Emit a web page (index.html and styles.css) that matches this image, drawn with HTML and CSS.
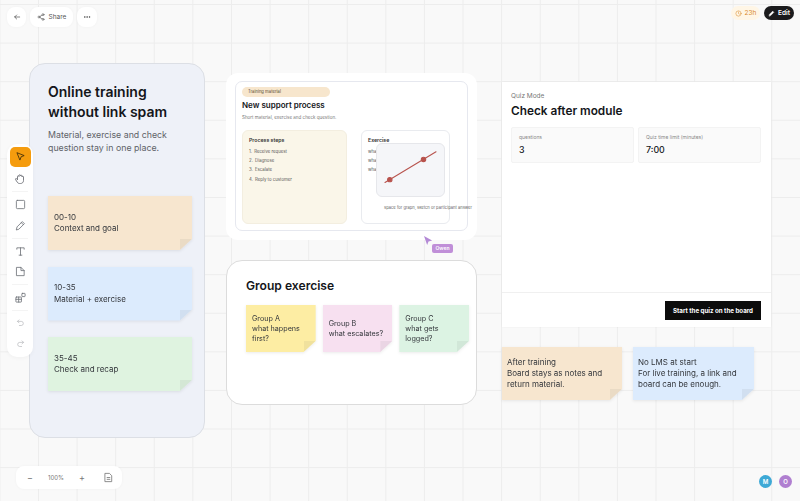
FILE: index.html
```html
<!DOCTYPE html>
<html lang="en">
<head>
  <meta charset="UTF-8" />
  <title>Online training board</title>
  <link rel="stylesheet" href="styles.css">
</head>
<body>
  <div class="board">

    <!-- top left -->
    <div class="top-left">
      <button class="chip chip-icon">
        <svg viewBox="0 0 24 24"><path d="M20 12H5M11 6l-6 6 6 6"/></svg>
      </button>
      <button class="chip chip-share">
        <svg viewBox="0 0 24 24"><circle cx="18" cy="5" r="3"/><circle cx="6" cy="12" r="3"/><circle cx="18" cy="19" r="3"/><path d="M8.6 13.5l6.8 4M15.4 6.5l-6.8 4"/></svg>
        Share
      </button>
      <button class="chip chip-icon chip-more">
        <svg viewBox="0 0 24 24"><circle cx="5" cy="12" r="1"/><circle cx="12" cy="12" r="1"/><circle cx="19" cy="12" r="1"/></svg>
      </button>
    </div>

    <!-- top right -->
    <div class="top-right">
      <div class="timer">
        <svg viewBox="0 0 24 24"><circle cx="12" cy="12" r="9"/><path d="M12 7v5l3 2"/></svg>
        23h
      </div>
      <div class="edit">
        <svg viewBox="0 0 24 24"><path d="M4 20l1-5L16 4l4 4L9 19z"/></svg>
        Edit
      </div>
    </div>

    <!-- toolbar -->
    <div class="toolbar">
      <div class="tool tool-active">
        <svg viewBox="0 0 24 24"><path d="M5 4l15 6-6.5 2.5L11 19z"/></svg>
      </div>
      <div class="tool">
        <svg class="tool-hand" viewBox="0 0 24 24"><path d="M7 13V7a1.5 1.5 0 013 0V5a1.5 1.5 0 013 0v1a1.5 1.5 0 013 0v2a1.5 1.5 0 013 0v7c0 4-3 6-6 6h-2c-3 0-4-2-6-5l-2-3c-1-2 2-3 3-1z"/></svg>
      </div>
      <div class="tool-sep"></div>
      <div class="tool">
        <svg viewBox="0 0 24 24"><rect x="3" y="3" width="18" height="18" rx="2"/></svg>
      </div>
      <div class="tool">
        <svg viewBox="0 0 24 24"><path d="M3 21l1.500-6L16 3.500l4.500 4.500L9 19.500zM14 6l4 4"/></svg>
      </div>
      <div class="tool-sep"></div>
      <div class="tool">
        <svg viewBox="0 0 24 24"><path d="M4 7V4h16v3M12 4v16M9 20h6"/></svg>
      </div>
      <div class="tool">
        <svg viewBox="0 0 24 24"><path d="M4 3h9l7 7v11H4zM13 3v7h7"/></svg>
      </div>
      <div class="tool-sep"></div>
      <div class="tool">
        <svg viewBox="0 0 24 24"><rect x="2" y="11" width="12" height="11" rx="1"/><path d="M2 16h12M8 11v11"/><rect x="15" y="3" width="7" height="7" rx="1"/></svg>
      </div>
      <div class="tool-sep"></div>
      <div class="tool tool-faint">
        <svg viewBox="0 0 24 24"><path d="M8 5L4 9l4 4M4 9h10a5 5 0 010 11H9"/></svg>
      </div>
      <div class="tool tool-faint">
        <svg viewBox="0 0 24 24"><path d="M16 5l4 4-4 4M20 9H10a5 5 0 000 11h5"/></svg>
      </div>
    </div>

    <!-- agenda card -->
    <div class="item agenda">
      <h1>Online training without link spam</h1>
      <p>Material, exercise and check question stay in one place.</p>
      <div class="agenda-notes">
        <div class="note note-orange">00-10<br>Context and goal</div>
        <div class="note note-blue">10-35<br>Material + exercise</div>
        <div class="note note-green">35-45<br>Check and recap</div>
      </div>
    </div>

    <!-- material frame -->
    <div class="item material">
      <div class="material-inner">
        <div class="tag">Training material</div>
        <h2>New support process</h2>
        <div class="material-sub">Short material, exercise and check question.</div>
        <div class="material-cols">
          <div class="steps">
            <h3>Process steps</h3>
            <ol>
              <li>Receive request</li>
              <li>Diagnose</li>
              <li>Escalate</li>
              <li>Reply to customer</li>
            </ol>
          </div>
          <div class="exercise">
            <h3>Exercise</h3>
            <ul>
              <li>what</li>
              <li>what</li>
              <li>what</li>
            </ul>
          </div>
        </div>
      </div>
    </div>

    <div class="item chart">
      <svg viewBox="0 0 69 54">
        <path d="M8 40L61 8"/>
        <circle cx="13" cy="37" r="2.3"/>
        <circle cx="48" cy="16" r="2.3"/>
      </svg>
    </div>
    <div class="item chart-caption">space for graph, sketch or participant answer</div>

    <svg class="item cursor" viewBox="0 0 10 10"><path d="M0 0l9 5-4 1-1.500 4z"/></svg>
    <div class="item owner">Owen</div>

    <!-- group exercise -->
    <div class="item group">
      <h2>Group exercise</h2>
      <div class="group-notes">
        <div class="note note-yellow">Group A<br>what happens first?</div>
        <div class="note note-pink">Group B<br>what escalates?</div>
        <div class="note note-mint">Group C<br>what gets logged?</div>
      </div>
    </div>

    <!-- quiz -->
    <div class="item quiz">
      <div class="quiz-top">
        <div class="quiz-mode">Quiz Mode</div>
        <h2>Check after module</h2>
        <div class="stats">
          <div class="stat">
            <div class="stat-label">questions</div>
            <div class="stat-value">3</div>
          </div>
          <div class="stat">
            <div class="stat-label">Quiz time limit (minutes)</div>
            <div class="stat-value">7:00</div>
          </div>
        </div>
      </div>
      <div class="quiz-foot">
        <button class="quiz-start">Start the quiz on the board</button>
      </div>
    </div>

    <div class="item loose-note after-note">
      <div class="note note-orange">After training<br>Board stays as notes and return material.</div>
    </div>
    <div class="item loose-note lms-note">
      <div class="note note-blue">No LMS at start<br>For live training, a link and board can be enough.</div>
    </div>

    <!-- zoom -->
    <div class="zoombar">
      <span class="zoom-btn">&minus;</span>
      <span class="zoom-val">100%</span>
      <span class="zoom-btn">+</span>
      <svg viewBox="0 0 24 24"><path d="M5 3h9l5 5v13H5zM9 12h6M9 16h6"/></svg>
    </div>

    <!-- people -->
    <div class="people">
      <div class="avatar avatar-m">M</div>
      <div class="avatar avatar-o">O</div>
    </div>
  </div>
</body>
</html>
```

FILE: styles.css
```css
* {
  box-sizing: border-box;
}
html, body {
  margin: 0;
  height: 100%;
}
body {
  font-family: Inter, "Liberation Sans", sans-serif;
  color: #14161a;
  overflow: hidden;
}
h1, h2, h3, p, ol, ul {
  margin: 0;
  padding: 0;
}
button {
  font-family: inherit;
  border: none;
  padding: 0;
}
svg {
  fill: none;
  stroke: currentColor;
  stroke-width: 1.8;
  stroke-linecap: round;
  stroke-linejoin: round;
}
.board {
  position: relative;
  width: 800px;
  height: 501px;
  overflow: hidden;
  background-color: #f9f9f9;
  background-image:
    linear-gradient(to right, #ededed 1px, transparent 1px),
    linear-gradient(to bottom, #ededed 1px, transparent 1px);
  background-size: 38.6px 38.6px;
  background-position: 38px 4px;
}
.item {
  position: absolute;
}

/* top bars */
.top-left {
  position: absolute;
  top: 7px;
  left: 7px;
  display: flex;
  gap: 4px;
}
.chip {
  height: 20px;
  background: #fff;
  border-radius: 8px;
  display: flex;
  align-items: center;
  justify-content: center;
  color: #555;
  font-size: 6.5px;
  box-shadow: 0 0 3px rgba(0,0,0,0.04);
}
.chip svg {
  width: 8px;
  height: 8px;
}
.chip-icon {
  width: 19px;
  color: #333;
}
.chip-more {
  width: 20px;
}
.chip-share {
  width: 43px;
  gap: 4px;
}
.top-right {
  position: absolute;
  top: 6px;
  right: 6px;
  display: flex;
  gap: 4px;
}
.timer, .edit {
  height: 14px;
  border-radius: 7px;
  display: flex;
  align-items: center;
  justify-content: center;
  gap: 3px;
  font-size: 6.5px;
}
.timer {
  width: 29px;
  background: #fff6e6;
  color: #d98a2b;
}
.edit {
  width: 30px;
  background: #1b1b1d;
  color: #fff;
  font-weight: 600;
}
.timer svg, .edit svg {
  width: 7px;
  height: 7px;
}
.edit svg {
  fill: #fff;
}

/* toolbar */
.toolbar {
  position: absolute;
  top: 144px;
  left: 7px;
  width: 26px;
  height: 213px;
  padding: 3px 2px;
  background: #fff;
  border-radius: 10px;
  display: flex;
  flex-direction: column;
  align-items: center;
  box-shadow: 0 1px 4px rgba(0,0,0,0.04);
  z-index: 5;
}
.tool {
  width: 21px;
  height: 21px;
  display: flex;
  align-items: center;
  justify-content: center;
  color: #6f7278;
}
.tool svg {
  width: 11px;
  height: 11px;
}
.tool .tool-hand {
  width: 12px;
  height: 12px;
}
.tool-active {
  background: #f59c0e;
  border-radius: 5px;
  color: #3b2a0a;
  height: 20px;
  margin-bottom: 2px;
}
.tool-faint {
  color: #b4b6ba;
}
.tool-faint svg {
  width: 9px;
  height: 9px;
}
.tool-sep {
  height: 1px;
  width: 16px;
  margin: 2px 0;
  background: #f4f4f4;
}

/* stickies: the corner is cut off, so the shadow comes from the parent's filter */
.note {
  position: relative;
  font-size: 8px;
  line-height: 11.2px;
  color: #33363b;
  display: flex;
  flex-direction: column;
  justify-content: center;
  clip-path: polygon(0 0, 100% 0, 100% calc(100% - 11px), calc(100% - 12px) 100%, 0 100%);
}
.note::after {
  content: "";
  position: absolute;
  right: 0;
  bottom: 0;
  width: 12px;
  height: 11px;
  background: rgba(90,90,90,0.08);
  clip-path: polygon(100% 0, 0 100%, 0 0);
}
.note-orange { background: #f7e6cf; }
.note-blue { background: #dcebfd; }
.note-green { background: #dff3e0; }
.note-yellow { background: #fdeda3; }
.note-pink { background: #f7e0f0; }
.note-mint { background: #dcf3e3; }
.agenda-notes, .group-notes, .loose-note {
  filter: drop-shadow(0 1px 1.5px rgba(0,0,0,0.08));
}

/* agenda */
.agenda {
  left: 29px;
  top: 63px;
  width: 176px;
  height: 375px;
  padding: 18px 12px 0 18px;
  background: #eef1f8;
  border: 1px solid #dcdfe5;
  border-radius: 16px;
}
.agenda h1 {
  font-size: 14px;
  line-height: 19.5px;
  font-weight: 600;
}
.agenda p {
  margin-top: 8px;
  font-size: 8.8px;
  line-height: 12.5px;
  color: #5f6368;
}
.agenda-notes {
  margin-top: 42px;
  display: flex;
  flex-direction: column;
  gap: 16.5px;
}
.agenda-notes .note {
  height: 54px;
  padding: 0 6px;
}

/* material */
.material {
  left: 226px;
  top: 73px;
  width: 251px;
  height: 167px;
  padding: 8px 9px 9px;
  background: #fff;
  border-radius: 12px;
}
.material-inner {
  height: 150px;
  padding: 5px 6px;
  border: 1px solid #e6e8ef;
  border-radius: 7px;
}
.tag {
  width: 88px;
  height: 10px;
  padding-left: 6px;
  border-radius: 5px;
  background: #f7e6cd;
  font-size: 4.2px;
  line-height: 10px;
  color: #5a4a30;
}
.material h2 {
  margin-top: 2px;
  font-size: 8px;
  line-height: 13px;
  font-weight: 600;
}
.material-sub {
  margin-top: 2px;
  font-size: 4.5px;
  line-height: 7px;
  color: #777;
}
.material-cols {
  margin-top: 9px;
  display: flex;
  gap: 14px;
}
.steps, .exercise {
  height: 94px;
  padding: 5px 6px;
  border-radius: 6px;
}
.steps {
  width: 105px;
  background: #faf6e9;
  border: 1px solid #f3eee0;
}
.exercise {
  width: 89px;
  background: #fff;
  border: 1px solid #e9ebef;
}
.steps h3, .exercise h3 {
  font-size: 5.2px;
  line-height: 8px;
  font-weight: 600;
  color: #333;
}
.steps ol, .exercise ul {
  list-style: none;
  margin-top: 3px;
  font-size: 4.3px;
  line-height: 9.2px;
  color: #555;
}
.steps li {
  counter-increment: step;
}
.steps li::before {
  content: counter(step) ". ";
  margin-right: 1px;
}
.chart {
  left: 376px;
  top: 143px;
  width: 69px;
  height: 54px;
  background: #f5f6f9;
  border: 1px solid #e6e7eb;
  border-radius: 6px;
}
.chart svg {
  display: block;
  width: 100%;
  height: 100%;
  color: #b8534d;
  stroke-width: 1.1;
}
.chart circle {
  fill: #b8534d;
}
.chart-caption {
  left: 384px;
  top: 204px;
  white-space: nowrap;
  font-size: 4.1px;
  line-height: 7px;
  color: #666;
}
.cursor {
  left: 424px;
  top: 236px;
  width: 9px;
  height: 9px;
  fill: #b48ad6;
  stroke: none;
}
.owner {
  left: 432px;
  top: 244px;
  width: 21px;
  height: 9px;
  border-radius: 2px;
  background: #c08fd8;
  color: #fff;
  font-size: 5px;
  font-weight: 600;
  line-height: 9px;
  text-align: center;
}

/* group */
.group {
  left: 226px;
  top: 260px;
  width: 251px;
  height: 145px;
  padding: 16px 7px 0 19px;
  background: #fff;
  border: 1px solid #dcdcdc;
  border-radius: 16px;
}
.group h2 {
  font-size: 12.1px;
  line-height: 17px;
  font-weight: 600;
}
.group-notes {
  margin-top: 11px;
  display: flex;
  gap: 7px;
}
.group-notes .note {
  width: 70px;
  height: 47px;
  padding: 0 6px;
  font-size: 7.2px;
  line-height: 10px;
}

/* quiz */
.quiz {
  left: 502px;
  top: 82px;
  width: 269px;
  height: 245px;
  background: #fff;
  display: flex;
  flex-direction: column;
  justify-content: space-between;
  box-shadow: 0 0 2px rgba(0,0,0,0.05);
}
.quiz-top {
  padding: 10px 10px 0 9px;
}
.quiz-mode {
  font-size: 6.5px;
  line-height: 9px;
  color: #777;
}
.quiz h2 {
  margin-top: 2px;
  font-size: 11.8px;
  line-height: 16px;
  font-weight: 600;
}
.stats {
  margin-top: 8px;
  display: grid;
  grid-template-columns: 123px 123px;
  gap: 4px;
}
.stat {
  height: 36px;
  padding: 6px 7px 0;
  background: #fafafa;
  border: 1px solid #f3f3f3;
  border-radius: 2px;
}
.stat-label {
  font-size: 5px;
  line-height: 7px;
  color: #888;
}
.stat-value {
  margin-top: 2px;
  font-size: 8.8px;
  line-height: 13px;
  font-weight: 500;
}
.quiz-foot {
  height: 35px;
  padding: 8px 10px 0 0;
  border-top: 1px solid #f0f0f0;
  display: flex;
  justify-content: flex-end;
}
.quiz-start {
  width: 96px;
  height: 19px;
  background: #0c0c0c;
  color: #fff;
  font-size: 6.2px;
  font-weight: 700;
}
.loose-note .note {
  height: 53px;
  padding: 0 5px;
  line-height: 10.7px;
}
.after-note {
  left: 502px;
  top: 347px;
  width: 120px;
}
.lms-note {
  left: 633px;
  top: 347px;
  width: 121px;
}

/* bottom */
.zoombar {
  position: absolute;
  left: 16px;
  top: 466px;
  width: 106px;
  height: 23px;
  padding-left: 9px;
  background: #fff;
  border-radius: 8px;
  display: flex;
  align-items: center;
  color: #777;
  box-shadow: 0 0 3px rgba(0,0,0,0.04);
}
.zoombar svg {
  width: 11px;
  height: 11px;
  margin-left: 16px;
}
.zoom-btn {
  width: 10px;
  text-align: center;
  font-size: 9px;
}
.zoom-val {
  width: 42px;
  text-align: center;
  font-size: 6px;
}
.people {
  position: absolute;
  right: 8px;
  top: 475px;
  display: flex;
  gap: 7px;
}
.avatar {
  width: 13px;
  height: 13px;
  border-radius: 50%;
  color: #fff;
  font-size: 6px;
  font-weight: 600;
  line-height: 13px;
  text-align: center;
}
.avatar-m { background: #3ea9d6; }
.avatar-o { background: #b07fd0; }
```
